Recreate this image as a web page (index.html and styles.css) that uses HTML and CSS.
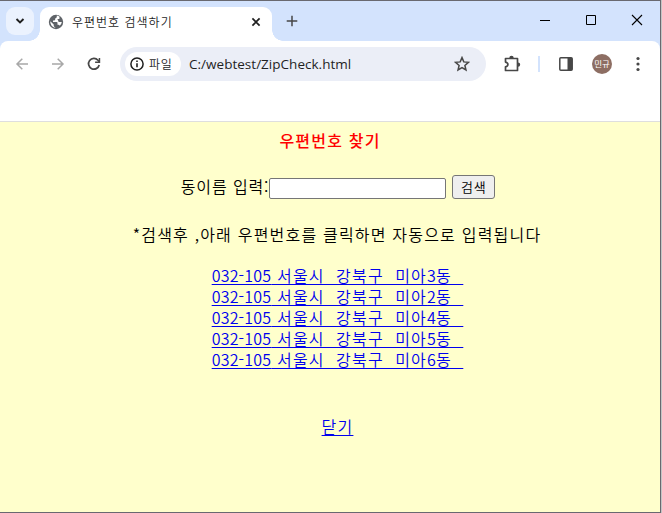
FILE: index.html
```html
<!DOCTYPE html>
<html lang="ko">
<head>
<meta charset="utf-8">
<title>우편번호 검색하기</title>
<link rel="stylesheet" href="styles.css">
</head>
<body>
<div class="window">
  <header class="tabstrip">
    <div class="tab-search"><svg width="10" height="8" viewBox="0 0 10 8"><path d="M1.500 2 5 5.500 8.500 2" fill="none" stroke="#1f1f1f" stroke-width="1.900"/></svg></div>
    <div class="tab">
      <svg class="globe" width="16" height="16" viewBox="0 0 16 16"><circle cx="8" cy="8" r="7.200" fill="#5f6368"/><path d="M8.800 1.500v1.200c0 .900-.700 1.500-1.600 1.500v1.400c0 .500-.400.800-.800.800H5v1.500h3.700c.500 0 .800.400.800.800v2h.800c.700 0 1.200.400 1.400 1A5.800 5.800 0 0 0 13.800 8h-2.200c-1.200 0-1.500-.700-1.500-1.500S9.300 5 8.800 5h2.600V3.200l.500-.300A6 6 0 0 0 8.800 1.500ZM2.300 7.300 5.700 10.600v.800c0 .800.600 1.500 1.500 1.500v.900A5.900 5.900 0 0 1 2.300 7.300Z" fill="#fff"/></svg>
      <span class="tab-title">우편번호 검색하기</span>
      <svg class="tab-close" width="10" height="10" viewBox="0 0 10 10"><path d="m1.400 1.400 7.200 7.200m0-7.200-7.200 7.200" stroke="#1f1f1f" stroke-width="1.700"/></svg>
    </div>
    <svg class="new-tab" width="12" height="12" viewBox="0 0 12 12"><path d="M6 .700v10.600M.700 6h10.600" stroke="#474747" stroke-width="1.500"/></svg>
    <div class="controls">
      <svg width="12" height="12" viewBox="0 0 12 12"><path d="M1 6.500h10" stroke="#000"/></svg>
      <svg width="12" height="12" viewBox="0 0 12 12"><path d="M1.500 1.500h9v9h-9z" fill="none" stroke="#000"/></svg>
      <svg width="12" height="12" viewBox="0 0 12 12"><path d="m1 1 10 10M11 1 1 11" stroke="#000" stroke-width="1.100"/></svg>
    </div>
  </header>
  <div class="toolbar">
    <svg class="back" width="14" height="14" viewBox="0 0 14 14"><path d="M13 7H2m5.300-5.300L2 7l5.300 5.300" fill="none" stroke="#a8a8a8" stroke-width="1.500"/></svg>
    <svg class="forward" width="14" height="14" viewBox="0 0 14 14"><path d="M1 7h11M6.700 1.700 12 7l-5.300 5.300" fill="none" stroke="#a8a8a8" stroke-width="1.500"/></svg>
    <svg class="reload" width="14" height="14" viewBox="0 0 14 14"><path d="M12.200 8A5.400 5.400 0 1 1 11 3.200l1.300 1.500" fill="none" stroke="#474747" stroke-width="1.700"/><path d="M13.200 1v5H8.100V4.500h3.600V1Z" fill="#474747"/></svg>
    <div class="address">
      <div class="scheme">
        <svg width="14" height="14" viewBox="0 0 14 14"><circle cx="7" cy="7" r="6.100" fill="none" stroke="#1f1f1f" stroke-width="1.500"/><path d="M7 6.300v4M7 3.500V5" stroke="#1f1f1f" stroke-width="1.600"/></svg>
        <span>파일</span>
      </div>
      <span class="url">C:/webtest/ZipCheck.html</span>
      <svg class="star" width="16" height="16" viewBox="0 0 16 16"><path d="m8 1.600 1.800 4.300 4.600.400-3.500 3.100 1.050 4.600L8 11.600 4.050 14l1.050-4.600-3.500-3.100 4.600-.400Z" fill="none" stroke="#474747" stroke-width="1.500"/></svg>
    </div>
    <svg class="puzzle" width="18" height="18" viewBox="0 0 18 18"><path d="M2.500 3.500h12v12h-12v-3.600c3.200-.800 3.200-4 0-4.800Z" fill="none" stroke="#474747" stroke-width="1.700" stroke-linejoin="round"/><path d="M6.300 3a2.200 2.200 0 0 1 4.400 0ZM15 7.400a2.200 2.200 0 0 1 0 4.400Z" fill="#474747"/></svg>
    <span class="divider"></span>
    <svg class="panel" width="14" height="14" viewBox="0 0 14 14"><rect x=".800" y=".800" width="12.400" height="12.400" rx="1" fill="none" stroke="#474747" stroke-width="1.500"/><path d="M8.500 1H13v12H8.500Z" fill="#474747"/></svg>
    <span class="avatar">민규</span>
    <svg class="menu" width="4" height="16" viewBox="0 0 4 16"><g fill="#474747"><circle cx="2" cy="2.500" r="1.600"/><circle cx="2" cy="8" r="1.600"/><circle cx="2" cy="13.500" r="1.600"/></g></svg>
  </div>
  <main class="page">
    <h1>우편번호 찾기</h1>
    <form class="search"><label for="dong">동이름 입력:</label><input id="dong" type="text"><button type="button">검색</button></form>
    <p class="note">*검색후 ,아래 우편번호를 클릭하면 자동으로 입력됩니다</p>
    <div class="results">
      <a href="#"><span class="num">032-105</span> 서울시&nbsp; 강북구&nbsp; 미아<span class="num">3</span>동&nbsp;&nbsp;</a>
      <a href="#"><span class="num">032-105</span> 서울시&nbsp; 강북구&nbsp; 미아<span class="num">2</span>동&nbsp;&nbsp;</a>
      <a href="#"><span class="num">032-105</span> 서울시&nbsp; 강북구&nbsp; 미아<span class="num">4</span>동&nbsp;&nbsp;</a>
      <a href="#"><span class="num">032-105</span> 서울시&nbsp; 강북구&nbsp; 미아<span class="num">5</span>동&nbsp;&nbsp;</a>
      <a href="#"><span class="num">032-105</span> 서울시&nbsp; 강북구&nbsp; 미아<span class="num">6</span>동&nbsp;&nbsp;</a>
    </div>
    <a class="close" href="#">닫기</a>
  </main>
</div>
</body>
</html>
```
FILE: styles.css
```css
* { box-sizing: border-box; }
body { margin: 0; background: #c4c4c4; font-family: "Noto Sans CJK KR", sans-serif; font-weight: 350; overflow: hidden; }
svg { display: block; flex: none; }
.window { width: 661px; height: 513px; border: solid #696970; border-width: 1px 1px 1px 0; background: #d3e3fd; display: flex; flex-direction: column; }

.tabstrip { height: 40px; display: flex; align-items: flex-start; flex: none; }
.tab-search { width: 28px; height: 28px; margin: 6px 0 0 6px; border-radius: 9px; background: #ebf2fe; display: flex; align-items: center; justify-content: center; }
.tab { width: 232px; height: 34px; margin: 6px 0 0 6px; padding: 0 11px 5px 8px; border-radius: 9px 9px 0 0; background: #fff; display: flex; align-items: center; position: relative; }
.tab::before, .tab::after { content: ""; position: absolute; bottom: 0; width: 11px; height: 11px; }
.tab::before { right: 100%; background: radial-gradient(circle at 0 0, transparent 10.5px, #fff 11px); }
.tab::after { left: 100%; background: radial-gradient(circle at 100% 0, transparent 10.5px, #fff 11px); }
.tab-title { margin-left: 8px; font-size: 12px; line-height: 18px; letter-spacing: 1px; color: #1f1f1f; white-space: nowrap; }
.tab-close { margin-left: auto; }
.new-tab { margin: 14px 0 0 14px; }
.controls { margin: 13px 17px 0 auto; display: flex; gap: 34px; }

.toolbar { height: 80px; padding: 6px 20px 0 15px; background: #fff; display: flex; align-items: flex-start; flex: none; border-radius: 8px 8px 0 0; }
.back { margin-top: 10px; }
.forward { margin: 10px 0 0 22px; }
.reload { margin: 10px 0 0 22px; }
.address { width: 366px; height: 34px; margin-left: 19px; padding: 0 16px 0 5px; border-radius: 17px; background: #ebeef7; display: flex; align-items: center; color: #1f1f1f; }
.scheme { width: 56px; height: 24px; padding-left: 5px; border-radius: 12px; background: #fff; display: flex; align-items: center; gap: 5px; font-size: 12px; line-height: 18px; letter-spacing: .8px; }
.url { margin-left: 8px; font: 400 13.5px/20px "Open Sans", sans-serif; letter-spacing: .02px; }
.star { margin-left: auto; }
.puzzle { margin: 8px 0 0 17px; }
.divider { width: 2px; height: 16px; margin: 9px 0 0 17px; background: #d3e3fd; }
.panel { margin: 10px 0 0 19px; }
.avatar { width: 20px; height: 20px; margin: 7px 0 0 19px; border-radius: 50%; background: #8d6e63; color: #fff; font-size: 8.5px; font-weight: 400; line-height: 19px; text-align: center; }
.menu { margin: 9px 0 0 auto; }

.page { flex: 1; border-top: 1px solid #dedede; padding-top: 9px; background: #ffffcc; display: flex; flex-direction: column; align-items: center; font-size: 16px; line-height: 21px; letter-spacing: 1.2px; color: #000; }
h1 { margin: 0; font-size: 16px; line-height: 19px; letter-spacing: 1.2px; color: #f00; font-weight: 500; }
.search { margin: 24px 0 0 16px; height: 26px; display: flex; align-items: flex-start; }
.search label { padding-top: 2px; letter-spacing: .9px; white-space: nowrap; }
.search input { width: 177px; height: 21px; margin-top: 4px; border: 1px solid #767676; border-radius: 2px; background: #fff; }
.search button { width: 43px; height: 24px; margin: 1px 0 0 6px; padding: 0; border: 1px solid #767676; border-radius: 3px; background: #efefef; font: 350 13px/18px "Noto Sans CJK KR", sans-serif; letter-spacing: .8px; color: #000; }
.note { margin: 24px 0 0 14px; white-space: nowrap; }
.results { margin: 20px 0 0 15px; display: flex; flex-direction: column; }
a { color: #0000ee; text-decoration: underline; text-decoration-thickness: 1px; text-underline-offset: 2px; text-decoration-skip-ink: none; }
.results a { height: 21px; white-space: nowrap; }
.num { letter-spacing: .2px; }
.close { margin: 46px 0 0 15px; }
```
